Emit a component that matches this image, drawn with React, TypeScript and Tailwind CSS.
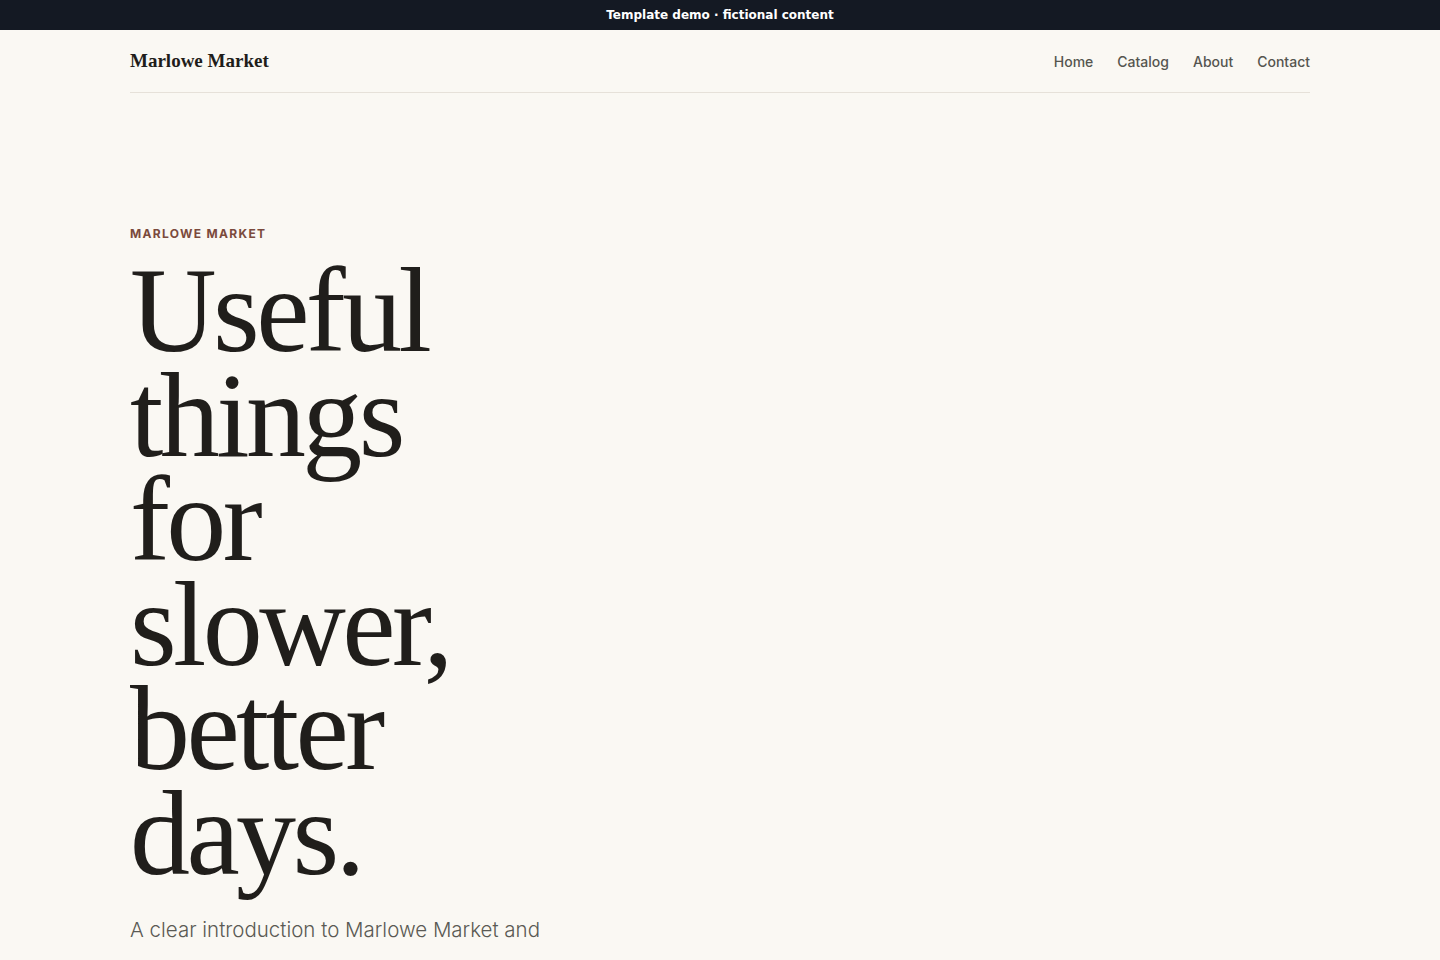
export default function App() {
  return (
    <div className="min-h-screen bg-[#faf8f3] text-[#1f1d1a]">
      <div className="flex h-[30px] items-center justify-center bg-[#141923]">
        <span className="text-[12px] font-bold text-white [font-family:'DejaVu_Sans',sans-serif]">
          Template demo · fictional content
        </span>
      </div>
      <header className="mx-auto flex h-[63px] max-w-[1180px] items-center justify-between border-b border-[#e6e1d9]">
        <a className="text-[19px] font-bold text-[#1f1d1a] [font-family:'Liberation_Serif',serif]">
          Marlowe Market
        </a>
        <nav className="flex items-center gap-[24px] text-[14px] font-medium text-[#55554f] [font-family:Inter,sans-serif]">
          <a>Home</a>
          <a>Catalog</a>
          <a>About</a>
          <a>Contact</a>
        </nav>
      </header>
      <main className="mx-auto max-w-[1180px] pt-[132px]">
        <p className="text-[12px] font-bold uppercase tracking-[0.11em] text-[#7b4a3c] [font-family:Inter,sans-serif]">
          Marlowe Market
        </p>
        <h1 className="mt-[16px] max-w-[380px] text-[120px] leading-[104.6px] tracking-[-0.03em] text-[#201e1b] [font-family:'Liberation_Serif',serif]">
          Useful things for slower, better days.
        </h1>
        <p className="mt-[23px] max-w-[440px] text-[20.5px] font-light leading-[40px] text-[#5a5a54] [font-family:Inter,sans-serif]">
          A clear introduction to Marlowe Market and the everyday goods we make for homes that move at a gentler pace.
        </p>
      </main>
    </div>
  );
}
